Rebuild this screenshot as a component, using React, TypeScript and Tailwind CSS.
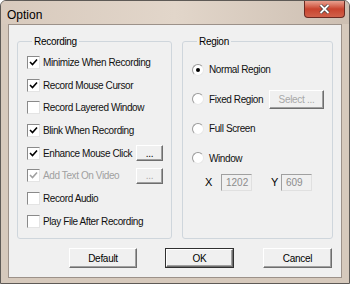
const font = { fontFamily: '"Liberation Sans", Arial, sans-serif' };

const Check = ({ checked, disabled }: { checked?: boolean; disabled?: boolean }) => (
  <span className="w-[13px] h-[13px] shrink-0 border border-t-[#8a8a8a] border-l-[#8a8a8a] border-r-[#e4e4e4] border-b-[#e4e4e4] bg-white flex items-center justify-center">
    {checked && (
      <svg width="9" height="9" viewBox="0 0 9 9">
        <path d="M1 4 L3.5 6.5 L8 1.5" fill="none" stroke={disabled ? '#a0a0a0' : '#000'} strokeWidth="1.6" />
      </svg>
    )}
  </span>
);

const Radio = ({ checked }: { checked?: boolean }) => (
  <span className="w-[12px] h-[12px] shrink-0 rounded-full border border-[#9a9a9a] border-r-[#e8e8e8] border-b-[#e8e8e8] bg-white flex items-center justify-center">
    {checked && <span className="w-[4px] h-[4px] rounded-full bg-black" />}
  </span>
);

const Btn = ({ label, disabled, def, className }: { label: string; disabled?: boolean; def?: boolean; className: string }) => (
  <div className={`${className} ${def ? 'border border-[#303030]' : ''} flex`}>
    <div
      className={`flex-1 flex items-center justify-center bg-[#f0f0f0] border border-t-white border-l-white border-r-[#6e6e6e] border-b-[#6e6e6e] shadow-[inset_-1px_-1px_0_#a0a0a0] text-[10px] tracking-[-0.3px] whitespace-nowrap ${
        disabled ? 'text-[#a8a8a8]' : 'text-black'
      }`}
    >
      {label}
    </div>
  </div>
);

const CheckRow = ({ label, checked, disabled, more }: { label: string; checked?: boolean; disabled?: boolean; more?: boolean }) => (
  <div className="h-[22.7px] flex items-center">
    <Check checked={checked} disabled={disabled} />
    <span className={`ml-[3px] text-[10px] tracking-[-0.4px] whitespace-nowrap ${disabled ? 'text-[#a0a0a0]' : 'text-[#111]'}`}>{label}</span>
    {more && <Btn label="..." disabled={disabled} className="ml-auto mr-[8px] w-[27px] h-[16px]" />}
  </div>
);

const RadioRow = ({ label, checked, children, h }: { label: string; checked?: boolean; children?: React.ReactNode; h: string }) => (
  <div className={`${h} flex items-center`}>
    <Radio checked={checked} />
    <span className="ml-[5px] text-[10px] tracking-[-0.4px] whitespace-nowrap text-[#111]">{label}</span>
    {children}
  </div>
);

const Field = ({ value }: { value: string }) => (
  <span className="w-[31px] h-[17px] border border-t-[#a0a0a0] border-l-[#a0a0a0] border-r-[#e0e0e0] border-b-[#e0e0e0] bg-[#f0f0f0] text-[#8c8c8c] text-[10px] flex items-center pl-[4px]">
    {value}
  </span>
);

export default function App() {
  return (
    <div style={font} className="w-[350px] h-[284px] bg-[#d6c9bc] border border-[#5e5a56] rounded-t-[6px] flex flex-col overflow-hidden">
      <div className="h-[23px] flex items-start bg-gradient-to-r from-[#d8cabd] via-[#e2d6ca] to-[#cdbfb2]">
        <span className="ml-[6px] mt-[5px] text-[12px] text-black">Option</span>
        <div className="ml-auto mr-[4px] w-[41px] h-[17px] rounded-b-[4px] border border-t-0 border-[#6b2a22] bg-gradient-to-b from-[#e8a090] via-[#c8432e] to-[#d0604a] flex items-center justify-center">
          <svg width="11" height="10" viewBox="0 0 11 10">
            <path d="M1.5 1 L9.5 9 M9.5 1 L1.5 9" stroke="#3a3a3a" strokeWidth="3.2" />
            <path d="M1.5 1 L9.5 9 M9.5 1 L1.5 9" stroke="#fff" strokeWidth="1.8" />
          </svg>
        </div>
      </div>
      <div className="mx-[7px] h-[254px] border border-[#9c9189] bg-[#f0f0f0] flex flex-col">
        <div className="flex mt-[9px] ml-[8px] gap-[10px]">
          <fieldset className="w-[155px] h-[205px] border border-[#cfd6dc] rounded-[3px] pl-[9px]">
            <legend className="ml-[5px] px-[2px] text-[10px] tracking-[-0.3px] text-black">Recording</legend>
            <div className="mt-[2px] flex flex-col">
              <CheckRow label="Minimize When Recording" checked />
              <CheckRow label="Record Mouse Cursor" checked />
              <CheckRow label="Record Layered Window" />
              <CheckRow label="Blink When Recording" checked />
              <CheckRow label="Enhance Mouse Click" checked more />
              <CheckRow label="Add Text On Video" checked disabled more />
              <CheckRow label="Record Audio" />
              <CheckRow label="Play File After Recording" />
            </div>
          </fieldset>
          <fieldset className="w-[151px] h-[205px] border border-[#cfd6dc] rounded-[3px] pl-[9px]">
            <legend className="ml-[5px] px-[2px] text-[10px] tracking-[-0.3px] text-black">Region</legend>
            <div className="mt-[6px] flex flex-col">
              <RadioRow label="Normal Region" checked h="h-[29px]" />
              <RadioRow label="Fixed Region" h="h-[30px]">
                <Btn label="Select ..." disabled className="ml-auto mr-[8px] w-[55px] h-[19px]" />
              </RadioRow>
              <RadioRow label="Full Screen" h="h-[29px]" />
              <RadioRow label="Window" h="h-[30px]" />
              <div className="h-[19px] flex items-center text-[11px]">
                <span className="ml-[13px] w-[16px]">X</span>
                <Field value="1202" />
                <span className="ml-[19px] w-[10px]">Y</span>
                <Field value="609" />
              </div>
            </div>
          </fieldset>
        </div>
        <div className="flex mt-[9px] ml-[60px]">
          <Btn label="Default" className="w-[68px] h-[20px]" />
          <Btn label="OK" def className="ml-[28px] w-[69px] h-[20px]" />
          <Btn label="Cancel" className="ml-[29px] w-[69px] h-[20px]" />
        </div>
      </div>
    </div>
  );
}
